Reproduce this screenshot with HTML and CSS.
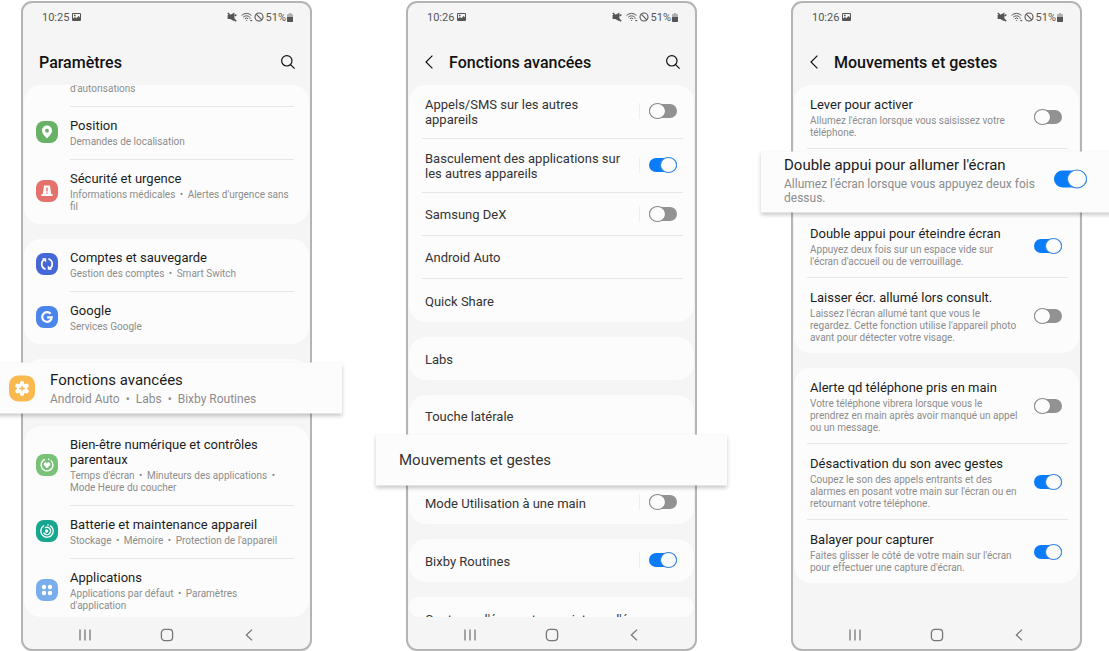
FILE: index.html
```html
<!DOCTYPE html>
<html lang="fr">
<head>
  <meta charset="UTF-8">
  <meta name="viewport" content="width=device-width, initial-scale=1.0">
  <title>Mouvements et gestes</title>
  <link rel="stylesheet" href="styles.css">
</head>
<body>

<!-- ICONS -->
<svg class="sprite" aria-hidden="true">
  <symbol id="photo" viewBox="0 0 9 8">
    <path fill="currentColor" fill-rule="evenodd" d="M1 0h7a1 1 0 0 1 1 1v6a1 1 0 0 1-1 1H1a1 1 0 0 1-1-1V1a1 1 0 0 1 1-1zM1 1v4.6l2-1.6 1.4 1.2L6.6 3 8 4.4V1zM2 1.8h1.6v1.4H2z"/>
  </symbol>
  <symbol id="mute" viewBox="0 0 10 10">
    <path fill="currentColor" d="M.6 3h2.600L7.400.6v8.600L3.200 7H.6z"/>
    <path fill="none" stroke="currentColor" stroke-width="1.600" d="M.8 1l8.400 8.200M7.600 3.800l1.800-1.200"/>
  </symbol>
  <symbol id="wifi" viewBox="0 0 12 10">
    <path fill="none" stroke="currentColor" stroke-width="1" d="M.6 3.400a7 7 0 0 1 9.800 0M2.200 5.200a4.700 4.700 0 0 1 6.600 0M3.800 6.800a2.500 2.500 0 0 1 3.400 0"/>
    <path fill="currentColor" d="M4.600 8h1.800l-.9 1zM8 6.600l1.200-1.200 1.200 1.200zM8.800 8l1.400 1.600L11.600 8z"/>
  </symbol>
  <symbol id="ban" viewBox="0 0 10 10">
    <path fill="none" stroke="currentColor" stroke-width="1.100" d="M5 1a4 4 0 1 0 0 8a4 4 0 0 0 0-8M2.200 2.200l5.600 5.600"/>
  </symbol>
  <symbol id="battery" viewBox="0 0 6 9">
    <path fill="#b0b0b0" d="M1.800 0h2.400v1H5.400l.6.8V4H0V1.800L.6 1h1.200z"/>
    <path fill="currentColor" d="M0 4h6v4.400l-.6.6H.6L0 8.400z"/>
  </symbol>
  <symbol id="search" viewBox="0 0 16 16">
    <path fill="none" stroke="currentColor" stroke-width="1.200" d="M6.800 1.600a5.200 5.200 0 1 0 0 10.400a5.200 5.200 0 0 0 0-10.400M10.600 10.600l4 4"/>
  </symbol>
  <symbol id="back" viewBox="0 0 10 16">
    <path fill="none" stroke="currentColor" stroke-width="1.200" d="M8.400 1.600L2 8l6.400 6.400"/>
  </symbol>
  <symbol id="nav-recent" viewBox="0 0 14 14">
    <path fill="none" stroke="currentColor" stroke-width="1.300" d="M2 1.500v11M7 1.500v11M12 1.500v11"/>
  </symbol>
  <symbol id="nav-home" viewBox="0 0 14 14">
    <rect x="1.400" y="1.400" width="11.200" height="11.200" rx="3.400" fill="none" stroke="currentColor" stroke-width="1.300"/>
  </symbol>
  <symbol id="nav-back" viewBox="0 0 14 14">
    <path fill="none" stroke="currentColor" stroke-width="1.300" d="M10 1.600L4.400 7l5.600 5.400"/>
  </symbol>
  <symbol id="pin" viewBox="0 0 22 22">
    <path fill="currentColor" fill-rule="evenodd" d="M11 4.600a5 5 0 0 0-5 5c0 3.300 3 5.700 5 7.900c2-2.200 5-4.600 5-7.900a5 5 0 0 0-5-5zM11 7.800a1.900 1.900 0 1 1 0 3.800a1.900 1.900 0 0 1 0-3.800z"/>
  </symbol>
  <symbol id="alarm" viewBox="0 0 22 22">
    <path fill="currentColor" fill-rule="evenodd" d="M8 5.400h6l1.200 8.600H16.600v2H5.400v-2h1.400zM10.300 7.400v4h1.400v-4zM10.300 12.400v1.400h1.400v-1.400z"/>
  </symbol>
  <symbol id="sync" viewBox="0 0 22 22">
    <path fill="none" stroke="currentColor" stroke-width="1.700" d="M9.600 16.200C4.600 14.400 4.800 8.400 8.200 6.400M12.400 5.800c5 1.800 4.800 7.800 1.400 9.800"/>
    <path fill="currentColor" d="M6 5.200h4.200v4.200zM16 16.800h-4.200v-4.200z"/>
  </symbol>
  <symbol id="google" viewBox="0 0 22 22">
    <path fill="none" stroke="currentColor" stroke-width="2.200" d="M14.600 7.800A4.800 4.800 0 1 0 15.800 11.300H11.200"/>
  </symbol>
  <symbol id="gear" viewBox="0 0 26 26">
    <g fill="currentColor">
      <circle cx="13" cy="13" r="5.400"/>
      <rect x="11" y="5.600" width="4" height="14.800" rx="1.600"/>
      <rect x="11" y="5.600" width="4" height="14.800" rx="1.600" transform="rotate(60 13 13)"/>
      <rect x="11" y="5.600" width="4" height="14.800" rx="1.600" transform="rotate(120 13 13)"/>
    </g>
    <path stroke="#f9b94e" stroke-width="1.300" d="M13 10.200v5.600M10.200 13h5.600"/>
  </symbol>
  <symbol id="wellbeing" viewBox="0 0 22 22">
    <circle cx="11" cy="11" r="5.900" fill="none" stroke="currentColor" stroke-width="1.400" stroke-dasharray="30 3 1.500 2.570" transform="rotate(-50 11 11)"/>
    <path fill="currentColor" d="M11 14.200L8 11.200a1.800 1.800 0 0 1 3-2a1.800 1.800 0 0 1 3 2z"/>
  </symbol>
  <symbol id="care" viewBox="0 0 22 22">
    <g fill="none" stroke="currentColor" stroke-width="1.300">
      <circle cx="11" cy="11" r="6.200" stroke-dasharray="32 3 1.500 2.450" transform="rotate(-60 11 11)"/>
      <path d="M9 7.800a3.700 3.700 0 1 1-1.400 4.800"/>
    </g>
    <circle cx="10.600" cy="11" r="1.700" fill="currentColor"/>
  </symbol>
  <symbol id="apps" viewBox="0 0 22 22">
    <g fill="currentColor">
      <circle cx="8" cy="8" r="2.200"/>
      <circle cx="14" cy="8" r="2.200"/>
      <circle cx="8" cy="14" r="2.200"/>
      <circle cx="14" cy="14" r="2.200"/>
    </g>
  </symbol>
</svg>

<main class="phones">

  <!-- PARAMÈTRES -->
  <section class="phone">
    <div class="status">
      <span>10:25</span>
      <svg class="s-photo"><use href="#photo"/></svg>
      <svg class="s-mute"><use href="#mute"/></svg>
      <svg class="s-wifi"><use href="#wifi"/></svg>
      <svg class="s-ban"><use href="#ban"/></svg>
      <span>51%</span>
      <svg class="s-battery"><use href="#battery"/></svg>
    </div>
    <header class="header">
      <h1>Paramètres</h1>
      <button class="search" aria-label="Rechercher"><svg><use href="#search"/></svg></button>
    </header>

    <div class="list">
      <div class="card cut-top">
        <a class="item" href="#">
          <span class="text"><small>d'autorisations</small></span>
        </a>
        <a class="item" href="#">
          <svg class="icon green"><use href="#pin"/></svg>
          <span class="text"><b>Position</b><small>Demandes de localisation</small></span>
        </a>
        <a class="item" href="#">
          <svg class="icon red"><use href="#alarm"/></svg>
          <span class="text"><b>Sécurité et urgence</b><small>Informations médicales <i>•</i> Alertes d'urgence sans fil</small></span>
        </a>
      </div>

      <div class="card">
        <a class="item" href="#">
          <svg class="icon blue"><use href="#sync"/></svg>
          <span class="text"><b>Comptes et sauvegarde</b><small>Gestion des comptes <i>•</i> Smart Switch</small></span>
        </a>
        <a class="item" href="#">
          <svg class="icon azure"><use href="#google"/></svg>
          <span class="text"><b>Google</b><small>Services Google</small></span>
        </a>
      </div>

      <div class="card lowered">
        <div class="slot">
          <a class="callout" href="#">
            <svg class="icon orange"><use href="#gear"/></svg>
            <span class="text"><b>Fonctions avancées</b><small>Android Auto <i>•</i> Labs <i>•</i> Bixby Routines</small></span>
          </a>
        </div>
      </div>

      <div class="card">
        <a class="item" href="#">
          <svg class="icon lime"><use href="#wellbeing"/></svg>
          <span class="text"><b>Bien-être numérique et contrôles parentaux</b><small>Temps d'écran <i>•</i> Minuteurs des applications <i>•</i> Mode Heure du coucher</small></span>
        </a>
        <a class="item" href="#">
          <svg class="icon teal"><use href="#care"/></svg>
          <span class="text"><b>Batterie et maintenance appareil</b><small>Stockage <i>•</i> Mémoire <i>•</i> Protection de l'appareil</small></span>
        </a>
        <a class="item" href="#">
          <svg class="icon sky"><use href="#apps"/></svg>
          <span class="text"><b>Applications</b><small>Applications par défaut <i>•</i> Paramètres d'application</small></span>
        </a>
      </div>
    </div>

    <nav class="nav">
      <button aria-label="Applications récentes"><svg><use href="#nav-recent"/></svg></button>
      <button aria-label="Accueil"><svg><use href="#nav-home"/></svg></button>
      <button aria-label="Retour"><svg><use href="#nav-back"/></svg></button>
    </nav>
  </section>

  <!-- FONCTIONS AVANCÉES -->
  <section class="phone">
    <div class="status">
      <span>10:26</span>
      <svg class="s-photo"><use href="#photo"/></svg>
      <svg class="s-mute"><use href="#mute"/></svg>
      <svg class="s-wifi"><use href="#wifi"/></svg>
      <svg class="s-ban"><use href="#ban"/></svg>
      <span>51%</span>
      <svg class="s-battery"><use href="#battery"/></svg>
    </div>
    <header class="header">
      <button class="back" aria-label="Retour"><svg><use href="#back"/></svg></button>
      <h1>Fonctions avancées</h1>
      <button class="search" aria-label="Rechercher"><svg><use href="#search"/></svg></button>
    </header>

    <div class="list soft">
      <div class="card">
        <div class="row split">
          <label class="text" for="appels"><b>Appels/SMS sur les autres appareils</b></label>
          <input class="toggle" type="checkbox" id="appels">
        </div>
        <div class="row split">
          <label class="text" for="basculement"><b>Basculement des applications sur les autres appareils</b></label>
          <input class="toggle" type="checkbox" id="basculement" checked>
        </div>
        <div class="row split">
          <label class="text" for="dex"><b>Samsung DeX</b></label>
          <input class="toggle" type="checkbox" id="dex">
        </div>
        <a class="row" href="#"><b>Android Auto</b></a>
        <a class="row" href="#"><b>Quick Share</b></a>
      </div>

      <div class="card">
        <a class="row" href="#"><b>Labs</b></a>
      </div>

      <div class="card">
        <a class="row" href="#"><b>Touche latérale</b></a>
        <div class="slot short">
          <a class="callout" href="#"><span class="text"><b>Mouvements et gestes</b></span></a>
        </div>
        <div class="row split">
          <label class="text" for="une-main"><b>Mode Utilisation à une main</b></label>
          <input class="toggle" type="checkbox" id="une-main">
        </div>
      </div>

      <div class="card">
        <div class="row split">
          <label class="text" for="bixby"><b>Bixby Routines</b></label>
          <input class="toggle" type="checkbox" id="bixby" checked>
        </div>
      </div>

      <div class="card">
        <a class="row" href="#"><b>Captures d'écran et enregistreur d'écran</b></a>
      </div>
    </div>

    <nav class="nav">
      <button aria-label="Applications récentes"><svg><use href="#nav-recent"/></svg></button>
      <button aria-label="Accueil"><svg><use href="#nav-home"/></svg></button>
      <button aria-label="Retour"><svg><use href="#nav-back"/></svg></button>
    </nav>
  </section>

  <!-- MOUVEMENTS ET GESTES -->
  <section class="phone">
    <div class="status">
      <span>10:26</span>
      <svg class="s-photo"><use href="#photo"/></svg>
      <svg class="s-mute"><use href="#mute"/></svg>
      <svg class="s-wifi"><use href="#wifi"/></svg>
      <svg class="s-ban"><use href="#ban"/></svg>
      <span>51%</span>
      <svg class="s-battery"><use href="#battery"/></svg>
    </div>
    <header class="header">
      <button class="back" aria-label="Retour"><svg><use href="#back"/></svg></button>
      <h1>Mouvements et gestes</h1>
    </header>

    <div class="list">
      <div class="card">
        <div class="row">
          <label class="text" for="lever"><b>Lever pour activer</b><small>Allumez l'écran lorsque vous saisissez votre téléphone.</small></label>
          <input class="toggle" type="checkbox" id="lever">
        </div>
        <div class="slot tall">
          <div class="callout">
            <label class="text" for="allumer"><b>Double appui pour allumer l'écran</b><small>Allumez l'écran lorsque vous appuyez deux fois dessus.</small></label>
            <input class="toggle big" type="checkbox" id="allumer" checked>
          </div>
        </div>
        <div class="row">
          <label class="text" for="eteindre"><b>Double appui pour éteindre écran</b><small>Appuyez deux fois sur un espace vide sur l'écran d'accueil ou de verrouillage.</small></label>
          <input class="toggle" type="checkbox" id="eteindre" checked>
        </div>
        <div class="row">
          <label class="text" for="laisser"><b>Laisser écr. allumé lors consult.</b><small>Laissez l'écran allumé tant que vous le regardez. Cette fonction utilise l'appareil photo avant pour détecter votre visage.</small></label>
          <input class="toggle" type="checkbox" id="laisser">
        </div>
      </div>

      <div class="card">
        <div class="row">
          <label class="text" for="alerte"><b>Alerte qd téléphone pris en main</b><small>Votre téléphone vibrera lorsque vous le prendrez en main après avoir manqué un appel ou un message.</small></label>
          <input class="toggle" type="checkbox" id="alerte">
        </div>
        <div class="row">
          <label class="text" for="son"><b>Désactivation du son avec gestes</b><small>Coupez le son des appels entrants et des alarmes en posant votre main sur l'écran ou en retournant votre téléphone.</small></label>
          <input class="toggle" type="checkbox" id="son" checked>
        </div>
        <div class="row">
          <label class="text" for="balayer"><b>Balayer pour capturer</b><small>Faites glisser le côté de votre main sur l'écran pour effectuer une capture d'écran.</small></label>
          <input class="toggle" type="checkbox" id="balayer" checked>
        </div>
      </div>
    </div>

    <nav class="nav">
      <button aria-label="Applications récentes"><svg><use href="#nav-recent"/></svg></button>
      <button aria-label="Accueil"><svg><use href="#nav-home"/></svg></button>
      <button aria-label="Retour"><svg><use href="#nav-back"/></svg></button>
    </nav>
  </section>

</main>

</body>
</html>
```
FILE: styles.css
```css
* {
  margin: 0;
  padding: 0;
  box-sizing: border-box;
}
body {
  background: #fff;
  color: #1c1c1c;
  font-family: Roboto, Arial, sans-serif;
  overflow: hidden;
}
a {
  color: inherit;
  text-decoration: none;
}
button {
  display: flex;
  border: 0;
  background: none;
  color: inherit;
  cursor: pointer;
}
.sprite {
  display: none;
}
.phones {
  display: grid;
  grid-template-columns: repeat(3, 1fr);
  gap: 94px;
  height: 100vh;
  padding: 1px 27px 0 21px;
}
.phone {
  display: flex;
  flex-direction: column;
  min-width: 0;
  min-height: 0;
  background: #f5f5f5;
  border: 2px solid #b4b4b4;
  border-radius: 11px;
}

/* status bar */
.status {
  display: flex;
  align-items: center;
  height: 28px;
  padding: 0 17px 0 19px;
  color: #555;
  font-size: 11px;
}
.s-photo {
  width: 9px;
  height: 8px;
  margin-left: 3px;
}
.s-mute {
  width: 10px;
  height: 10px;
  margin-left: auto;
}
.s-wifi {
  width: 12px;
  height: 10px;
  margin: 0 1px 0 4px;
}
.s-ban {
  width: 10px;
  height: 10px;
  margin-right: 2px;
}
.s-battery {
  width: 6px;
  height: 9px;
  margin-left: 1px;
}

/* title bar */
.header {
  display: flex;
  align-items: center;
  height: 54px;
  padding: 8px 14px 0 16px;
  color: #111;
}
.header h1 {
  font-size: 16px;
  font-weight: 500;
}
.back svg {
  width: 10px;
  height: 16px;
}
.back {
  margin-right: 15px;
}
.search {
  margin-left: auto;
}
.search svg {
  width: 16px;
  height: 16px;
}

/* list of cards, cut off vertically only so that callouts can stick out */
.list {
  flex: 1;
  display: flex;
  flex-direction: column;
  gap: 15px;
  min-height: 0;
  overflow-x: visible;
  overflow-y: clip;
}
.card {
  flex-shrink: 0;
  margin: 0 1px;
  background: #fcfcfc;
  border-radius: 17px;
}
.card:last-child {
  flex-shrink: 1;
  min-height: 0;
  overflow: hidden;
}
.text {
  flex: 1;
  min-width: 0;
}
b {
  display: block;
  font-size: 13px;
  font-weight: 400;
  line-height: 15px;
}
small {
  display: block;
  margin-top: 3px;
  color: #8c8c8c;
  font-size: 10px;
  line-height: 12px;
}
small i {
  margin: 0 2px;
  font-style: normal;
}
.soft {
  color: #333;
}

/* rows with a coloured icon */
.item {
  display: flex;
  align-items: center;
  gap: 12px;
  padding: 0 15px 0 12px;
}
.item .text {
  padding: 11px 0;
  border-bottom: 1px solid #e6e6e6;
}
.item:last-child .text {
  border-bottom: 0;
}
.item .icon {
  margin-bottom: 3px;
}
.cut-top {
  overflow: hidden;
}
.cut-top .item:first-child {
  padding-left: 46px;
}
.cut-top .item:first-child .text {
  padding-top: 0;
}
.cut-top .item:first-child small {
  margin-top: -2px;
}
.icon {
  flex: none;
  width: 22px;
  height: 22px;
  border-radius: 8px;
  color: #fff;
}
.green { background: #68b266; }
.red { background: #e5716b; }
.blue { background: #4668d6; }
.azure { background: #4a86ea; }
.orange { background: #f9b94e; }
.lime { background: #78c277; }
.teal { background: #17a78f; }
.sky { background: #79aeed; }

/* plain rows */
.row {
  display: flex;
  align-items: center;
  gap: 16px;
  min-height: 43px;
  margin: 0 11px 0 13px;
  padding: 12px 6px 9px 3px;
}
.row:not(:last-child) {
  border-bottom: 1px solid #e6e6e6;
}
.soft .row {
  padding-bottom: 11px;
}
.split .toggle {
  position: relative;
}
.split .toggle::after {
  content: "";
  position: absolute;
  top: -1px;
  left: -10px;
  width: 1px;
  height: 16px;
  background: #efefef;
}

/* switches */
.toggle {
  flex: none;
  appearance: none;
  display: flex;
  width: 28px;
  height: 14px;
  margin-bottom: 2px;
  border-radius: 7px;
  background: #929292;
  cursor: pointer;
}
.toggle::before {
  content: "";
  flex: none;
  box-sizing: border-box;
  width: 17px;
  height: 16px;
  margin: -1px 0;
  border: 1px solid #8a8a8a;
  border-radius: 50%;
  background: #fcfcfc;
}
.toggle:checked {
  justify-content: flex-end;
  background: #0a7cf8;
}
.toggle:checked::before {
  border-color: #3a86dd;
}
.toggle.big {
  width: 33px;
  height: 17px;
  border-radius: 9px;
}
.toggle.big::before {
  width: 20px;
  height: 19px;
}

/* enlarged row lying over the phone */
.slot {
  position: relative;
  height: 52px;
}
.slot.short {
  height: 43px;
}
.slot.tall {
  height: 65px;
}
.lowered {
  margin-bottom: -3px;
  padding-top: 3px;
}
.callout {
  position: absolute;
  top: 50%;
  left: -33px;
  right: -33px;
  z-index: 1;
  display: flex;
  align-items: center;
  gap: 15px;
  min-height: 51px;
  padding: 4px 25px 4px 23px;
  background: #fcfcfc;
  box-shadow: 0 2px 4px rgba(0, 0, 0, 0.22);
  transform: translateY(-50%);
}
.tall .callout {
  padding-bottom: 8px;
}
.callout .icon {
  width: 26px;
  height: 26px;
  margin-left: -5px;
  border-radius: 9px;
}
.callout b {
  font-size: 15px;
  line-height: 18px;
}
.callout small {
  margin-top: 3px;
  font-size: 12px;
  line-height: 14px;
}
.callout i {
  margin: 0 3px;
}

/* navigation bar */
.nav {
  display: flex;
  justify-content: center;
  gap: 68px;
  height: 32px;
  padding-top: 4px;
  color: #777;
}
.nav button {
  align-items: center;
}
.nav svg {
  width: 14px;
  height: 14px;
}
```
